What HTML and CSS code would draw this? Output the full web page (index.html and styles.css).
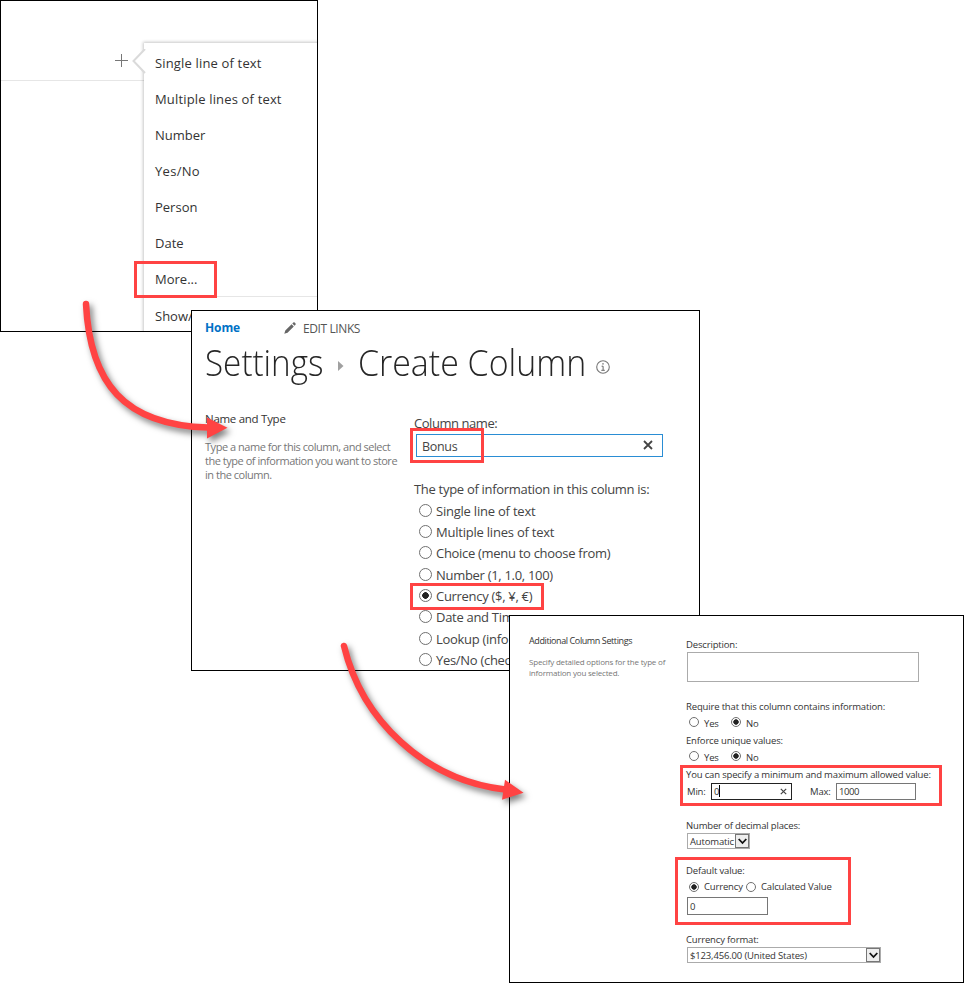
FILE: index.html
```
<!DOCTYPE html>
<html lang="en">
<head>
<meta charset="utf-8">
<title>Create a currency column</title>
<link rel="stylesheet" href="styles.css">
</head>
<body>
<main class="canvas">
  <section class="panel panel-menu">
    <div class="list-head">
      <svg class="plus" width="15" height="15" viewBox="0 0 15 15"><path d="M8.5 1v13M2 7.5h13" stroke="#777" stroke-width="1" fill="none"/></svg>
    </div>
    <div class="menu">
      <svg class="beak" width="14" height="26" viewBox="0 0 14 26"><path d="M13 0L1.5 12 13 24" fill="#fff" stroke="#dadada" stroke-width="2"/></svg>
      <div class="item wide">Single line of text</div>
      <div class="item wide">Multiple lines of text</div>
      <div class="item">Number</div>
      <div class="item wider">Yes/No</div>
      <div class="item">Person</div>
      <div class="item">Date</div>
      <div class="item">More...</div>
      <div class="item last">Show/</div>
    </div>
    <div class="mark mark-more"></div>
  </section>

  <section class="panel panel-create">
    <nav class="topnav">
      <span class="home">Home</span>
      <svg class="pencil" width="12" height="12" viewBox="0 0 12 12"><path d="M0.3 11.7L1.3 8.4 7.6 2.2 9.8 4.4 3.5 10.7ZM8.3 1.5L9.3 0.5Q10 0 10.7 0.6L11.4 1.3Q12 2 11.5 2.7L10.5 3.7Z" fill="#666"/></svg>
      <span class="edit">EDIT LINKS</span>
    </nav>
    <h1 class="title">
      <span class="t1">Settings</span>
      <svg class="crumb" width="6" height="10" viewBox="0 0 6 10"><path d="M0 0L5.5 5 0 10Z" fill="#a0a0a0"/></svg>
      <span class="t2">Create Column</span>
      <svg class="info" width="14" height="14" viewBox="0 0 14 14"><circle cx="7" cy="7" r="6.3" fill="none" stroke="#777" stroke-width="1.1"/><path d="M6.3 3.2h1.4v1.4H6.3z" fill="#666"/><path d="M5.6 6.2h1.5v4M5.3 10.3h3.5" fill="none" stroke="#666"/></svg>
    </h1>
    <div class="cols">
      <div class="side">
        <h2 class="s1">Name and Type</h2>
        <p class="s2">Type a name for this column, and select<br>the type of information you want to store<br>in the column.</p>
      </div>
      <div class="form">
        <label class="f1">Column name:</label>
        <div class="field"><span>Bonus</span>
          <svg width="10" height="10" viewBox="0 0 10 10"><path d="M1 1L9 9M9 1L1 9" stroke="#444" stroke-width="1.8"/></svg></div>
        <div class="f2">The type of information in this column is:</div>
        <div class="opt"><i class="radio"></i><span class="loose">Single line of text</span></div>
        <div class="opt"><i class="radio"></i><span class="loose">Multiple lines of text</span></div>
        <div class="opt"><i class="radio"></i><span>Choice (menu to choose from)</span></div>
        <div class="opt"><i class="radio"></i><span>Number (1, 1.0, 100)</span></div>
        <div class="opt"><i class="radio on"></i><span>Currency ($, ¥, €)</span></div>
        <div class="opt"><i class="radio"></i><span>Date and Tim</span></div>
        <div class="opt"><i class="radio"></i><span>Lookup (info</span></div>
        <div class="opt"><i class="radio"></i><span>Yes/No (chec</span></div>
      </div>
    </div>
    <div class="mark mark-bonus"></div>
    <div class="mark mark-currency"></div>
  </section>

  <section class="panel panel-settings">
    <div class="aside">
      <h2 class="a1">Additional Column Settings</h2>
      <p class="a2">Specify detailed options for the type of<br>information you selected.</p>
    </div>
    <div class="fields">
      <div class="lbl">Description:</div>
      <div class="area"></div>
      <div class="lbl">Require that this column contains information:</div>
      <div class="yn"><i class="radio sm"></i><span class="yes">Yes</span><i class="radio sm on"></i><span>No</span></div>
      <div class="lbl">Enforce unique values:</div>
      <div class="yn"><i class="radio sm"></i><span class="yes">Yes</span><i class="radio sm on"></i><span>No</span></div>
      <div class="lbl">You can specify a minimum and maximum allowed value:</div>
      <div class="range">
        <span class="min">Min:</span>
        <div class="box active"><span>0</span><b class="caret"></b><svg width="7" height="7" viewBox="0 0 7 7"><path d="M.8 .8L6.2 6.2M6.2 .8L.8 6.2" stroke="#444" stroke-width="1.2"/></svg></div>
        <span class="max">Max:</span>
        <div class="box"><span class="num">1000</span></div>
      </div>
      <div class="lbl">Number of decimal places:</div>
      <div class="select auto"><span>Automatic</span><i class="drop"><svg width="9" height="7" viewBox="0 0 9 7"><path d="M.7 1L4.5 5 8.3 1" fill="none" stroke="#111" stroke-width="1.8"/></svg></i></div>
      <div class="lbl">Default value:</div>
      <div class="yn dv"><i class="radio sm on"></i><span class="cur">Currency</span><i class="radio sm"></i><span>Calculated Value</span></div>
      <div class="box dbox"><span>0</span></div>
      <div class="lbl">Currency format:</div>
      <div class="select money"><span>$123,456.00 (United States)</span><i class="drop"><svg width="9" height="7" viewBox="0 0 9 7"><path d="M.7 1L4.5 5 8.3 1" fill="none" stroke="#111" stroke-width="1.8"/></svg></i></div>
    </div>
    <div class="mark mark-range"></div>
    <div class="mark mark-default"></div>
  </section>

  <svg class="arrows" width="964" height="983" viewBox="0 0 964 983">
    <g class="arrow"><path class="shaft" d="M86 304C90 383 124 425 208 427.5"/><path class="head" d="M207 417.5L227.5 427.7 207 438.5Z"/></g>
    <g class="arrow"><path class="shaft" d="M344 646C362 720 424 780 505 789.5"/><path class="head" d="M505 779.7L523.5 792.7 502 799.8Z"/></g>
  </svg>
</main>
</body>
</html>
```
FILE: styles.css
```
* { box-sizing: border-box; }
body { margin: 0; background: #fff; font-family: "Open Sans", "Noto Sans", sans-serif; color: #333; }
h1, h2, p { margin: 0; font-weight: 400; }
.canvas { position: relative; width: 964px; height: 983px; overflow: hidden; }
.panel { position: absolute; background: #fff; border: 1px solid #000; overflow: hidden; white-space: nowrap; }
.mark { position: absolute; border: 3px solid #ff4343; }
svg { flex: none; display: block; }

/* column type menu */
.panel-menu { left: 0; top: 0; width: 318px; height: 332px; }
.list-head { height: 80px; border-bottom: 1px solid #e6e6e6; padding: 52px 0 0 112px; }
.menu { position: absolute; left: 143px; top: 42px; width: 200px; height: 320px; padding-top: 2px; background: #fff; box-shadow: 0 0 3px 1px rgba(0,0,0,.22); font-size: 13px; }
.beak { position: absolute; left: -12px; top: 6px; }
.item { height: 36px; line-height: 36px; padding-left: 11px; }
.item.wide { letter-spacing: .16px; }
.item.wider { letter-spacing: .3px; }
.item.last { border-top: 1px solid #e6e6e6; height: 40px; line-height: 39px; margin-top: -1px; }
.mark-more { left: 133px; top: 260px; width: 83px; height: 37px; }

/* create column page */
.panel-create { left: 191px; top: 310px; width: 509px; height: 361px; padding-left: 13px; }
.topnav { display: flex; align-items: center; height: 34px; font-size: 12px; }
.home { width: 79px; color: #0072c6; font-weight: 700; margin-top: -2px; letter-spacing: -.1px; }
.pencil { margin-right: 7px; }
.edit { color: #555; letter-spacing: -.4px; }
.title { display: flex; align-items: center; height: 40px; margin-top: -3px; font-size: 36px; font-weight: 300; color: #262626; }
.title span { transform-origin: 0 50%; }
.t1 { width: 117px; transform: scaleX(.923); }
.t2 { width: 226px; transform: scaleX(.942); }
.crumb { margin: 7px 14px 0 16px; }
.info { margin: 9px 0 0 12px; }
.cols { display: flex; padding-top: 28px; }
.side { width: 209px; }
.s1 { font-size: 11.5px; line-height: 18px; color: #333; letter-spacing: -.28px; }
.s2 { font-size: 11px; line-height: 14px; color: #777; margin-top: 12px; letter-spacing: -.47px; }
.form { font-size: 13px; color: #444; padding-top: 3px; letter-spacing: -.3px; }
.f1, .f2 { display: block; line-height: 20px; }
.f1 { letter-spacing: -.45px; }
.field { display: flex; align-items: center; justify-content: space-between; width: 247px; height: 23px; margin: 1px 0 22px 2px; padding: 1px 9px 0 5px; border: 1px solid #2a8dd4; font-size: 12.5px; }
.field svg { margin-top: -2px; }
.opt { display: flex; align-items: center; height: 21.35px; padding-left: 5px; }
.opt span { padding-top: 1px; }
.opt .loose { letter-spacing: -.22px; }
.f2 { margin-bottom: .6px; }
.radio { flex: none; width: 13px; height: 13px; border: 1px solid #707070; border-radius: 50%; margin-right: 4px; background: #fff; }
.radio.on { background: radial-gradient(circle, #222 0 3px, #fff 3.6px); }
.mark-bonus { left: 218px; top: 117px; width: 74px; height: 35px; }
.mark-currency { left: 218px; top: 272px; width: 134px; height: 27px; }

/* additional settings page */
.panel-settings { left: 509px; top: 615px; width: 455px; height: 368px; display: flex; font-size: 9.5px; color: #333; letter-spacing: -.16px; }
.aside { width: 176px; padding: 18px 0 0 19px; }
.a1 { font-size: 9px; line-height: 14px; letter-spacing: -.4px; }
.a2 { font-size: 8px; line-height: 11px; color: #777; margin-top: 8px; letter-spacing: -.19px; }
.fields { padding-top: 22px; }
.lbl { line-height: 14px; height: 14px; }
.area { width: 232px; height: 30px; margin: 0 0 18px 1px; border: 1px solid #ababab; }
.yn { display: flex; align-items: center; height: 20px; padding: 0 0 4px 3px; }
.yn span { padding-top: 2px; }
.radio.sm { width: 10px; height: 10px; }
.yn .radio.sm { margin-right: 5px; }
.yes { width: 27px; }
.radio.sm.on { background: radial-gradient(circle, #222 0 2.4px, #fff 3px); }
.range { display: flex; align-items: center; height: 20px; padding: 0 0 2px 1px; margin-bottom: 17px; }
.min { width: 24px; }
.box { position: relative; display: flex; align-items: center; width: 80px; height: 17px; border: 1px solid #767676; padding-left: 2px; }
.box .num { letter-spacing: -.4px; }
.box.active { width: 81px; border-color: #222; }
.box.active svg { margin-left: 60px; }
.caret { width: 1px; height: 12px; background: #000; }
.max { width: 26px; margin-left: 18px; }
.select { display: flex; align-items: center; justify-content: space-between; height: 16px; border: 1px solid #ababab; margin-left: 1px; padding-left: 2px; }
.auto { width: 63px; margin-bottom: 15px; }
.money { width: 194px; }
.drop { display: flex; align-items: center; justify-content: center; width: 14px; height: 14px; border: 1px solid #767676; background: #eee; }
.dv { padding-bottom: 2px; height: 19px; }
.dv span { padding-top: 0; }
.dbox { margin: 0 0 19px 1px; width: 81px; height: 18px; margin-bottom: 18px; }
.cur { width: 42px; }
.mark-range { left: 170px; top: 149px; width: 262px; height: 41px; }
.mark-default { left: 165px; top: 241px; width: 176px; height: 68px; }

/* arrows between the panels */
.arrows { position: absolute; left: 0; top: 0; }
.arrow { filter: drop-shadow(3px 4px 3px rgba(0,0,0,.5)); }
.shaft { fill: none; stroke: #ff4343; stroke-width: 6.5; stroke-linecap: round; }
.head { fill: #ff4343; }
```
